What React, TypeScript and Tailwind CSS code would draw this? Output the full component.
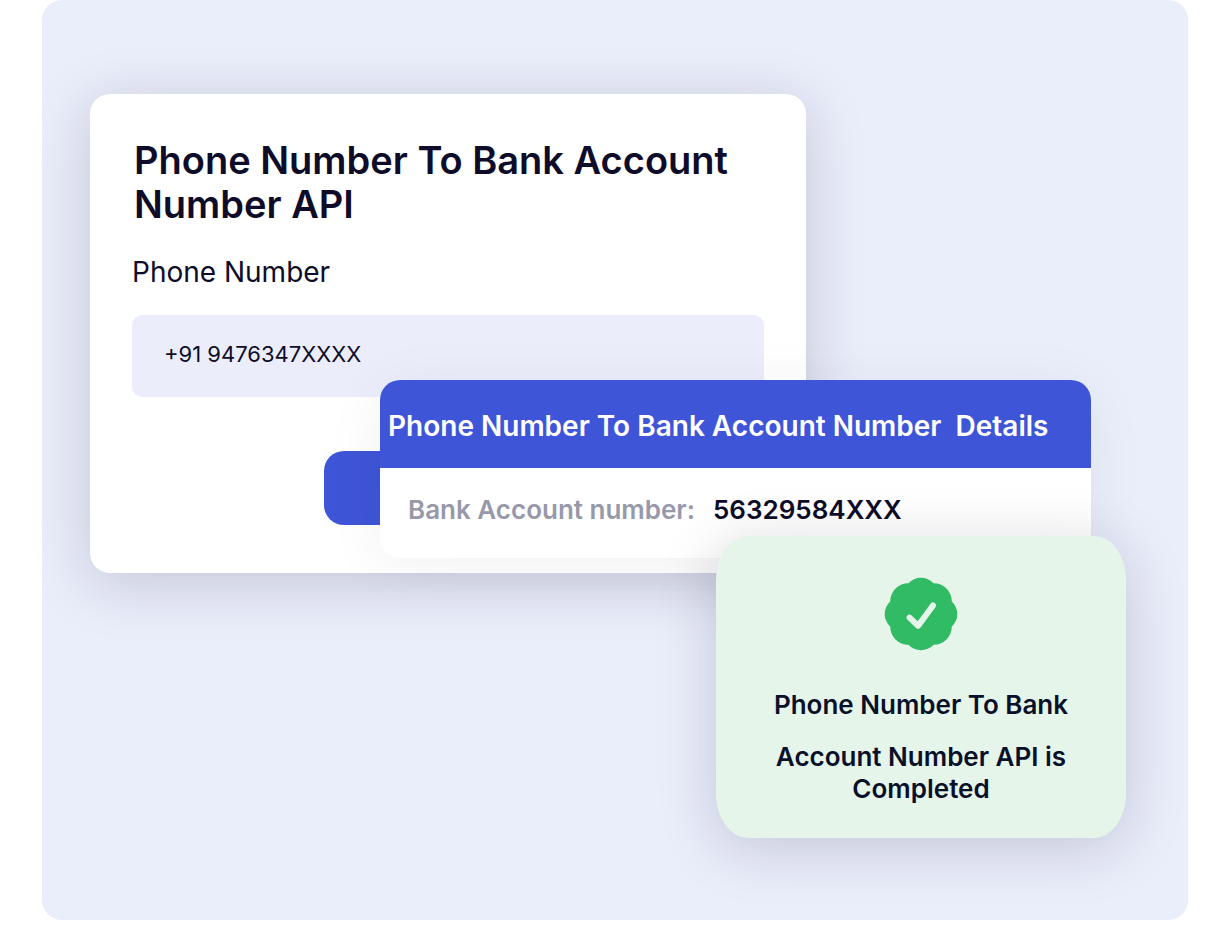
function VerifiedBadge() {
  return (
    <svg viewBox="-37 -37 74 74" className="size-[74px]" aria-hidden="true">
      <path
        fill="#30bb64"
        d="M-12.6-30.8A17.2 17.2 0 0 1 12.6-30.8A18.2 18.2 0 0 1 30.8-12.6A17.2 17.2 0 0 1 30.8 12.6A18.2 18.2 0 0 1 12.6 30.8A17.2 17.2 0 0 1-12.6 30.8A18.2 18.2 0 0 1-30.8 12.6A17.2 17.2 0 0 1-30.8-12.6A18.2 18.2 0 0 1-12.6-30.8Z"
      />
      <path
        d="M-11.4 3.6L-2.8 11.8L12-8.6"
        fill="none"
        stroke="#e6f5e9"
        strokeWidth="6"
        strokeLinecap="round"
        strokeLinejoin="round"
      />
    </svg>
  );
}

export default function App() {
  return (
    <main className="bg-white pr-7 pb-4 pl-[42px] font-['Inter',sans-serif] text-[#0e0c28]">
      <div className="rounded-[20px] bg-[#eaeefb] pt-[94px] pb-[347px] pl-12">
        <div className="relative max-w-[716px]">
          <form className="flex flex-col rounded-[20px] bg-white px-[42px] pt-11 pb-12 shadow-[0_10px_60px_rgba(20,10,40,0.18)]">
            <h1 className="pl-[2px] text-[38px] leading-[44px] font-semibold">
              Phone Number To Bank Account Number API
            </h1>
            <label htmlFor="phone" className="pt-7 text-[28px] leading-[36px]">
              Phone Number
            </label>
            <input
              id="phone"
              type="tel"
              defaultValue="+91 9476347XXXX"
              className="mt-[25px] h-[82px] w-full rounded-[10px] bg-[#ebedfb] px-8 pb-1 text-[22px] outline-none"
            />
            <button
              type="button"
              aria-label="Submit"
              className="mt-[54px] h-[74px] w-[248px] self-center rounded-[20px] bg-[#3e55d8]"
            />
          </form>

          <section className="absolute top-[286px] left-[290px] w-[711px] overflow-hidden rounded-[20px] bg-white shadow-[0_8px_60px_rgba(20,10,40,0.06)]">
            <h2 className="bg-[#3e55d8] px-2 pt-7 pb-6 text-[28px] leading-[36px] font-semibold whitespace-pre text-white">
              {"Phone Number To Bank Account Number  Details"}
            </h2>
            <dl className="flex gap-[18px] px-7 pt-[26px] pb-8 text-[26px] leading-[32px] font-semibold">
              <dt className="text-[#9798aa]">Bank Account number:</dt>
              <dd>56329584XXX</dd>
            </dl>
          </section>

          <section className="absolute top-[442px] left-[626px] flex w-[410px] flex-col items-center rounded-[32px/44px] bg-[#e6f5e9] px-12 pt-[41px] pb-[33px] text-center text-[26px] leading-[32px] font-semibold text-[#0a1029] shadow-[0_10px_60px_rgba(20,10,40,0.18)]">
            <VerifiedBadge />
            <p className="pt-[38px]">Phone Number To Bank</p>
            <p className="pt-5">Account Number API is Completed</p>
          </section>
        </div>
      </div>
    </main>
  );
}
